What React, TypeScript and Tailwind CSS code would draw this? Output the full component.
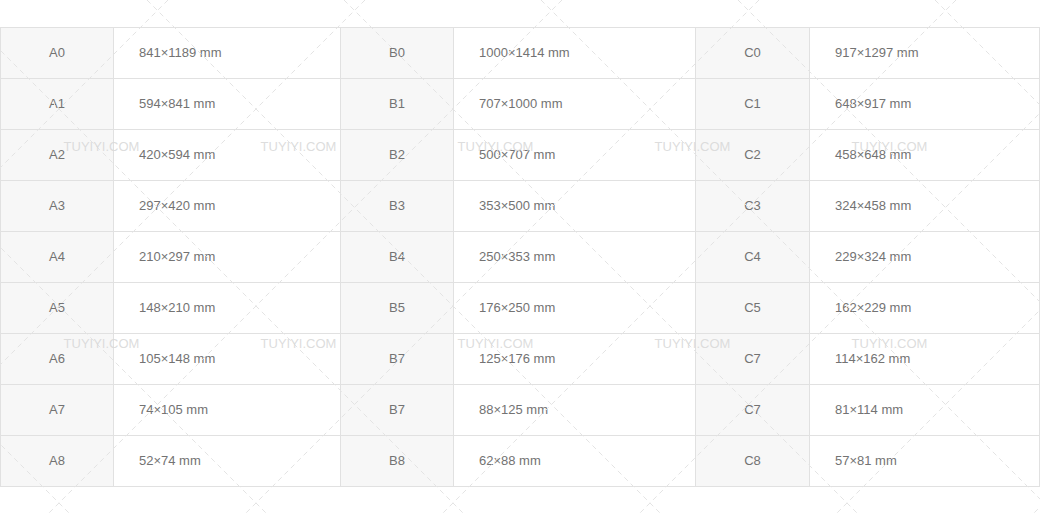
const ROWS: [string, string, string, string, string, string][] = [
  ["A0", "841×1189 mm", "B0", "1000×1414 mm", "C0", "917×1297 mm"],
  ["A1", "594×841 mm", "B1", "707×1000 mm", "C1", "648×917 mm"],
  ["A2", "420×594 mm", "B2", "500×707 mm", "C2", "458×648 mm"],
  ["A3", "297×420 mm", "B3", "353×500 mm", "C3", "324×458 mm"],
  ["A4", "210×297 mm", "B4", "250×353 mm", "C4", "229×324 mm"],
  ["A5", "148×210 mm", "B5", "176×250 mm", "C5", "162×229 mm"],
  ["A6", "105×148 mm", "B7", "125×176 mm", "C7", "114×162 mm"],
  ["A7", "74×105 mm", "B7", "88×125 mm", "C7", "81×114 mm"],
  ["A8", "52×74 mm", "B8", "62×88 mm", "C8", "57×81 mm"],
];

// watermark lattice: 45° dashed lines every 197px, text on every other crossing
const STEP = 197;

function Watermark() {
  const back: number[] = [];
  const fwd: number[] = [];
  for (let k = -4; k <= 6; k++) {
    back.push(147 + STEP * k);
    fwd.push(48 + STEP * k);
  }
  const marks: { x: number; y: number }[] = [];
  for (let i = 0; i < 5; i++) {
    for (let j = 0; j < 2; j++) {
      marks.push({ x: 101.5 + STEP * i, y: 151 + STEP * j });
    }
  }
  return (
    <svg
      className="pointer-events-none absolute left-0 top-0"
      width={1040}
      height={514}
      viewBox="0 0 1040 514"
    >
      <g stroke="#e4e4e4" strokeWidth={1} strokeDasharray="5 4" fill="none">
        {back.map((c) => (
          <line key={"b" + c} x1={c} y1={0} x2={c + 514} y2={514} />
        ))}
        {fwd.map((c) => (
          <line key={"f" + c} x1={c + 514} y1={0} x2={c} y2={514} />
        ))}
      </g>
      {marks.map((m) => (
        <text
          key={m.x + "-" + m.y}
          x={m.x}
          y={m.y}
          textAnchor="middle"
          fontSize={13}
          fontFamily="'Liberation Sans', Arial, sans-serif"
          fill="#d9d9d9"
          fillOpacity={0.9}
        >
          TUYIYI.COM
        </text>
      ))}
    </svg>
  );
}

export default function App() {
  return (
    <div className="relative h-[514px] w-[1040px] overflow-hidden bg-white pt-[27px] font-['Liberation_Sans',Arial,sans-serif] text-[13px] text-[#737373]">
      <div className="grid grid-cols-[113px_227px_113px_242px_114px_230px] border-l border-t border-[#e1e1e1]">
        {ROWS.map((row, r) =>
          row.map((cell, c) =>
            c % 2 === 0 ? (
              <div
                key={r + "-" + c}
                className="flex h-[51px] items-center justify-center border-b border-r border-[#e1e1e1] bg-[#f7f7f7]"
              >
                {cell}
              </div>
            ) : (
              <div
                key={r + "-" + c}
                className="flex h-[51px] items-center border-b border-r border-[#e1e1e1] bg-white pl-[25px]"
              >
                {cell}
              </div>
            )
          )
        )}
      </div>
      <Watermark />
    </div>
  );
}
